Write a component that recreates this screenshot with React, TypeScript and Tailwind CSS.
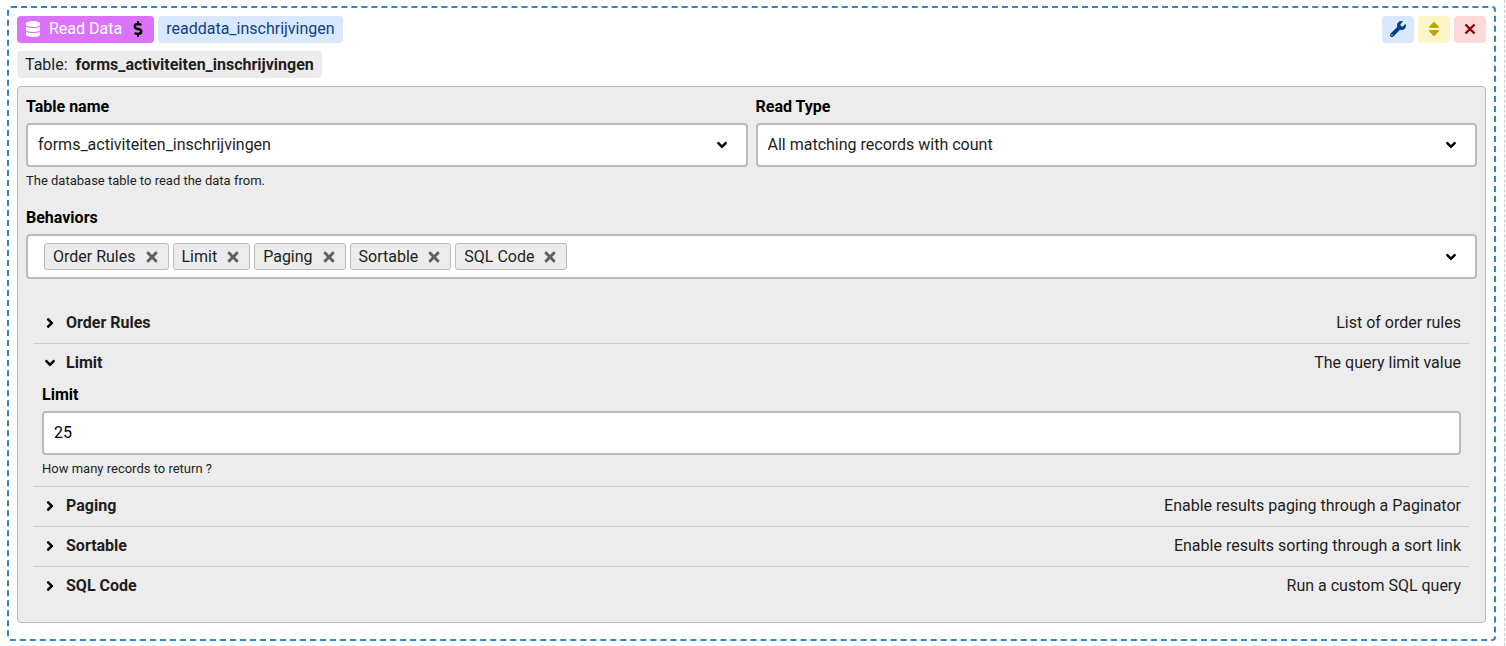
import { useState, type ReactNode } from "react"
import {
	FaAngleDown,
	FaAngleRight,
	FaDatabase,
	FaDollarSign,
	FaTimes,
	FaWrench,
} from "react-icons/fa"

type Behavior = {
	name: string
	description: string
}

const behaviors: Behavior[] = [
	{ name: "Order Rules", description: "List of order rules" },
	{ name: "Limit", description: "The query limit value" },
	{ name: "Paging", description: "Enable results paging through a Paginator" },
	{ name: "Sortable", description: "Enable results sorting through a sort link" },
	{ name: "SQL Code", description: "Run a custom SQL query" },
]

const labelClass = "block mb-1 leading-6 font-bold text-black"
const hintClass = "mt-1 text-[13px] leading-5"

function SortIcon() {
	return (
		<svg width="16" height="16" viewBox="0 0 16 16" fill="currentColor" aria-hidden="true">
			<path d="M7.3 1.3a1 1 0 0 1 1.4 0l4 4.2c.7.7.2 1.5-.7 1.5H4c-.9 0-1.4-.8-.7-1.5z" />
			<path d="M7.3 14.7a1 1 0 0 0 1.4 0l4-4.2c.7-.7.2-1.5-.7-1.5H4c-.9 0-1.4.8-.7 1.5z" />
		</svg>
	)
}

function CloseIcon() {
	return (
		<svg width="16" height="16" viewBox="0 0 16 16" fill="none" stroke="currentColor" strokeWidth="2.4" aria-hidden="true">
			<path d="M3.5 3.5l9 9M12.5 3.5l-9 9" />
		</svg>
	)
}

function SelectField({ id, label, options, hint }: { id: string; label: string; options: string[]; hint?: string }) {
	return (
		<div className="flex-1 min-w-0">
			<label htmlFor={id} className={labelClass}>
				{label}
			</label>
			<div className="relative">
				<select
					id={id}
					className="block w-full h-11 pl-2.5 pr-10 appearance-none bg-white border-2 border-[#bbb] rounded"
				>
					{options.map((option) => (
						<option key={option}>{option}</option>
					))}
				</select>
				<FaAngleDown
					size={16}
					className="absolute right-[18px] top-3.5 text-black pointer-events-none"
				/>
			</div>
			{hint && <p className={hintClass}>{hint}</p>}
		</div>
	)
}

function BehaviorRow({
	behavior,
	isOpen,
	onToggle,
	children,
}: {
	behavior: Behavior
	isOpen: boolean
	onToggle: () => void
	children?: ReactNode
}) {
	return (
		<div className="border-b border-[#ccc] last:border-b-0">
			<button
				type="button"
				aria-expanded={isOpen}
				onClick={onToggle}
				className="flex items-center w-full h-[39px] px-2 pb-px text-left"
			>
				<span className="w-4 mr-2 flex justify-center text-black">
					{isOpen ? <FaAngleDown size={16} /> : <FaAngleRight size={16} />}
				</span>
				<span className="flex-1 font-bold">{behavior.name}</span>
				<span>{behavior.description}</span>
			</button>
			{isOpen && children}
		</div>
	)
}

export default function App() {
	const [selected, setSelected] = useState(behaviors)
	const [expanded, setExpanded] = useState(["Limit"])

	const toggle = (name: string) => {
		setExpanded(expanded.includes(name) ? expanded.filter((n) => n !== name) : [...expanded, name])
	}

	return (
		<div className="min-h-screen mr-px pt-1.5 pl-[7px] pr-2 bg-white border-r border-dashed border-[#ccc] font-['Roboto',sans-serif] text-base text-[#1e1e1e]">
			<div className="px-2 pt-2 pb-4 border-2 border-dashed border-[#2f86cf] rounded">
				<div className="flex items-center justify-between">
					<div className="flex gap-1">
						<div className="flex items-center h-[27px] px-2 pb-px rounded bg-[#dc73ff] text-white">
							<FaDatabase size={16} />
							<span className="ml-2">Read Data</span>
							<FaDollarSign size={16} className="ml-2 text-black" />
						</div>
						<div className="flex items-center h-[27px] px-2 pb-px rounded bg-[#d9e8ff] text-[#10427f]">
							readdata_inschrijvingen
						</div>
					</div>
					<div className="flex gap-1">
						<button
							type="button"
							aria-label="Settings"
							className="flex items-center justify-center w-8 h-[27px] pb-px rounded bg-[#d9e8ff] text-[#003f8a]"
						>
							<FaWrench size={16} />
						</button>
						<button
							type="button"
							aria-label="Move"
							className="flex items-center justify-center w-8 h-[27px] pb-px rounded bg-[#fcf5c7] text-[#bba70c]"
						>
							<SortIcon />
						</button>
						<button
							type="button"
							aria-label="Remove"
							className="flex items-center justify-center w-8 h-[27px] pb-px rounded bg-[#ffd9d9] text-[#8f0000]"
						>
							<CloseIcon />
						</button>
					</div>
				</div>

				<div className="flex mt-2">
					<div className="flex items-center gap-2 h-[27px] px-2 rounded bg-[#ececec]">
						Table: <b>forms_activiteiten_inschrijvingen</b>
					</div>
				</div>

				<div className="mt-2 px-2 pt-2 pb-4 bg-[#ececec] border border-[#bbb] rounded">
					<div className="flex gap-2">
						<SelectField
							id="table-name"
							label="Table name"
							options={["forms_activiteiten_inschrijvingen"]}
							hint="The database table to read the data from."
						/>
						<SelectField
							id="read-type"
							label="Read Type"
							options={["All matching records with count"]}
						/>
					</div>

					{/* Behaviors */}
					<div className="mt-[15px]" role="group" aria-labelledby="behaviors-label">
						<span id="behaviors-label" className={labelClass}>
							Behaviors
						</span>
						<div className="flex items-center min-h-[45px] pl-4 pr-4 py-[7px] bg-white border-2 border-[#bbb] rounded">
							<div className="flex flex-1 flex-wrap gap-1">
								{selected.map((behavior) => (
									<span
										key={behavior.name}
										className="flex items-center h-[27px] px-2 bg-[#ececec] border border-[#bbb] rounded-[3px]"
									>
										{behavior.name}
										<button
											type="button"
											aria-label={`Remove ${behavior.name}`}
											className="ml-2 text-[#606060]"
											onClick={() => setSelected(selected.filter((b) => b !== behavior))}
										>
											<FaTimes size={16} />
										</button>
									</span>
								))}
							</div>
							<button type="button" aria-label="Show behaviors" className="text-black">
								<FaAngleDown size={16} />
							</button>
						</div>
					</div>

					<div className="mt-[25px] mx-2">
						{selected.map((behavior) => (
							<BehaviorRow
								key={behavior.name}
								behavior={behavior}
								isOpen={expanded.includes(behavior.name)}
								onToggle={() => toggle(behavior.name)}
							>
								{behavior.name === "Limit" && (
									<div className="px-2 pb-[7px]">
										<label htmlFor="limit" className={labelClass}>
											Limit
										</label>
										<input
											id="limit"
											type="text"
											defaultValue="25"
											className="block w-full h-11 px-2.5 pb-0.5 bg-white border-2 border-[#bbb] rounded text-black"
										/>
										<p className={hintClass}>How many records to return ?</p>
									</div>
								)}
							</BehaviorRow>
						))}
					</div>
				</div>
			</div>
		</div>
	)
}
